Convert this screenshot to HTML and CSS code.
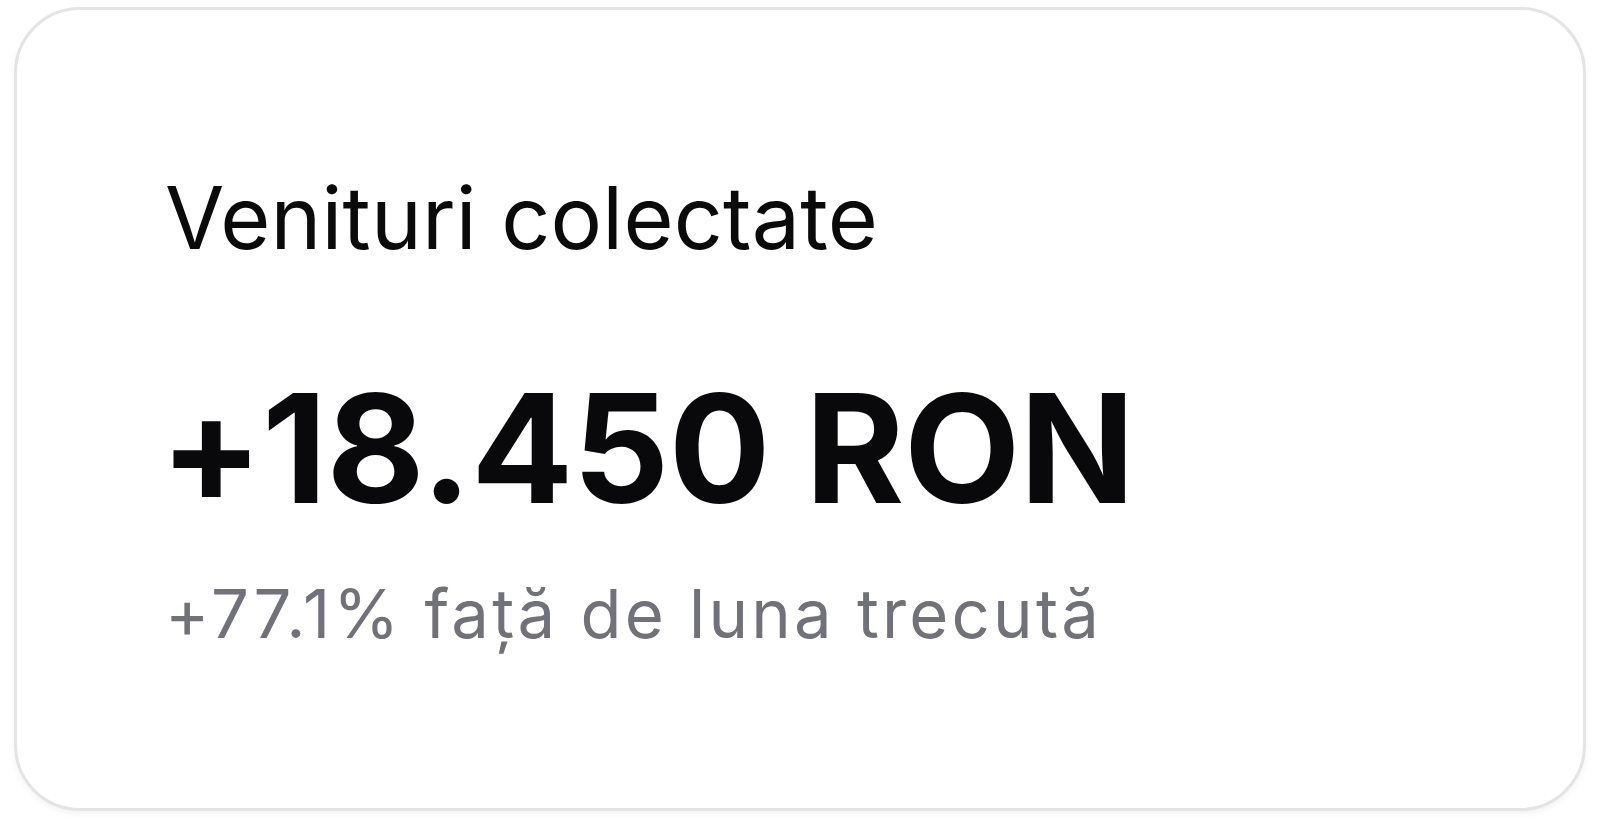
FILE: index.html
```html
<!DOCTYPE html>
<html>
<head>
<title>Venituri</title>
<link rel="stylesheet" href="styles.css">
</head>
<body>

<div class="card">
  <div class="card-title">Venituri colectate</div>
  <div class="card-value">+18.450 RON</div>
  <div class="card-note">+77.1% față de luna trecută</div>
</div>

</body>
</html>
```

FILE: styles.css
```css
body {
  margin: 0;
  padding: 7px 14px;
  background-color: #ffffff;
  font-family: Inter, 'Noto Sans', sans-serif;
  color: #0a0a0a;
}

.card {
  display: flex;
  flex-direction: column;
  height: 804px;
  box-sizing: border-box;
  padding: 165px 148px 0;
  border: 3px solid #e4e4e7;
  border-radius: 66px;
  background-color: #ffffff;
  box-shadow: 0 3px 6px rgba(0, 0, 0, 0.05);
}

.card-title {
  font-size: 86px;
  line-height: 1;
  font-weight: 400;
  letter-spacing: 0.2px;
}

.card-value {
  margin-top: 112px;
  margin-left: -5px;
  font-size: 151px;
  line-height: 1;
  font-weight: 700;
  letter-spacing: -0.5px;
  color: #09090b;
}

.card-note {
  margin-top: 56px;
  font-size: 67px;
  line-height: 1;
  letter-spacing: 3.2px;
  color: #71717a;
}
```
